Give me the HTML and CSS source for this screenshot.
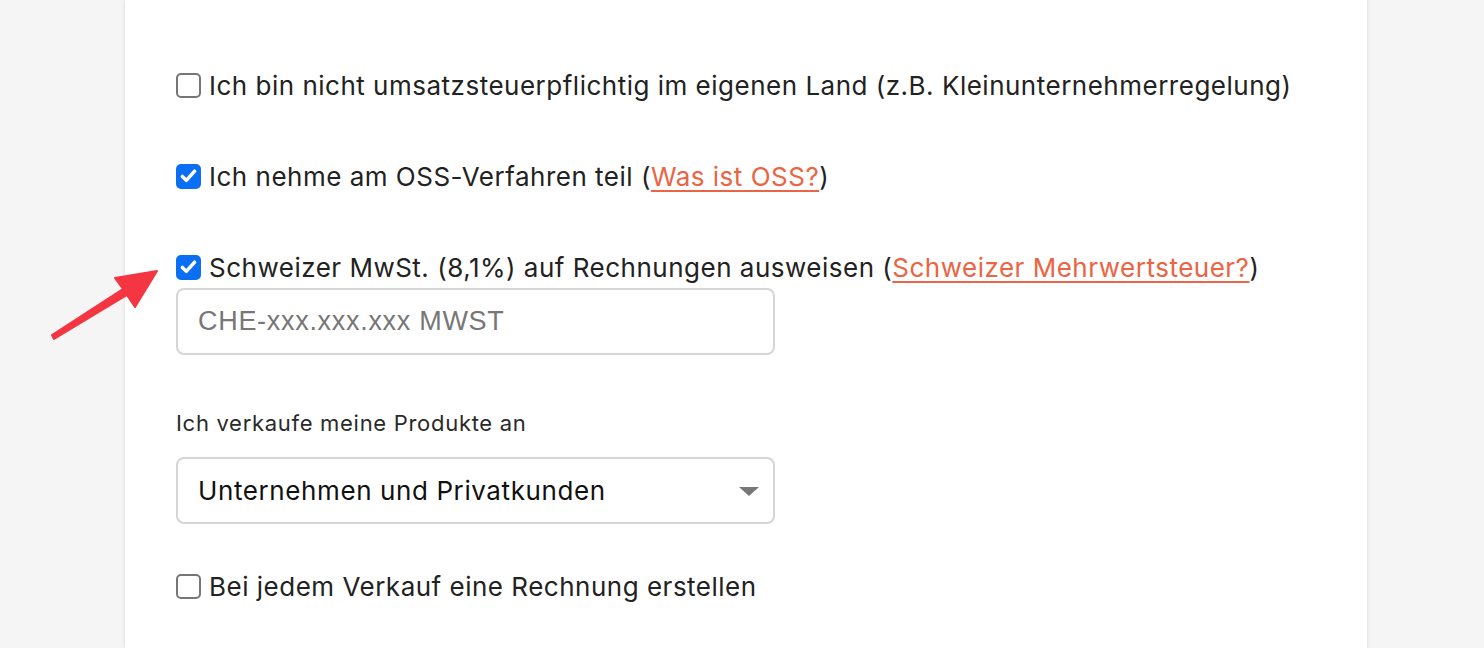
FILE: index.html
```html
<!DOCTYPE html>
<html lang="de">
<head>
<meta charset="UTF-8">
<meta name="viewport" content="width=device-width, initial-scale=1.0">
<title>Steuereinstellungen</title>
<link rel="stylesheet" href="styles.css">
</head>
<body>

<div class="page">
    <div class="panel">

        <label class="option first">
            <span class="check"></span>
            <span>Ich bin nicht umsatzsteuerpflichtig im eigenen Land (z.B. Kleinunternehmerregelung)</span>
        </label>

        <label class="option">
            <span class="check checked">
                <svg viewBox="0 0 24 24" width="22" height="22"><path d="M5 12.5l4.5 4.5L19 6.5" fill="none" stroke="#fff" stroke-width="4" stroke-linecap="round" stroke-linejoin="round"/></svg>
            </span>
            <span>Ich nehme am OSS-Verfahren teil (<a href="#" class="link">Was ist OSS?</a>)</span>
        </label>

        <label class="option">
            <span class="check checked">
                <svg viewBox="0 0 24 24" width="22" height="22"><path d="M5 12.5l4.5 4.5L19 6.5" fill="none" stroke="#fff" stroke-width="4" stroke-linecap="round" stroke-linejoin="round"/></svg>
            </span>
            <span>Schweizer MwSt. (8,1%) auf Rechnungen ausweisen (<a href="#" class="link">Schweizer Mehrwertsteuer?</a>)</span>
        </label>
        <input type="text" class="field" placeholder="CHE-xxx.xxx.xxx MWST">

        <div class="field-label">Ich verkaufe meine Produkte an</div>
        <div class="select-wrap">
            <select class="field select">
                <option>Unternehmen und Privatkunden</option>
            </select>
            <span class="caret"></span>
        </div>

        <label class="option last">
            <span class="check"></span>
            <span>Bei jedem Verkauf eine Rechnung erstellen</span>
        </label>

    </div>

    <!-- annotation arrow -->
    <svg class="arrow" width="180" height="360" viewBox="0 0 180 360">
        <polygon points="52,335 123,289 115,278 157,271 135,307 127,295 54,339" fill="#f43542" stroke="#f43542" stroke-width="2" stroke-linejoin="round"/>
    </svg>
</div>

</body>
</html>
```

FILE: styles.css
```css
body {
    margin: 0;
    background-color: #f5f5f5;
    font-family: Inter, "Noto Sans", sans-serif;
    color: #222222;
    overflow: hidden;
}
.page {
    position: relative;
    padding-left: 125px;
    height: 100vh;
}
.panel {
    background-color: #ffffff;
    width: 1242px;
    height: 100%;
    box-sizing: border-box;
    padding: 69px 0 0 51px;
    box-shadow: 0 0 4px rgba(0, 0, 0, 0.12);
}
.option {
    display: flex;
    align-items: center;
    gap: 8px;
    height: 32px;
    font-size: 26px;
    letter-spacing: 0.5px;
    margin-top: 59px;
    cursor: pointer;
}
.option.first {
    margin-top: 0;
}
.option.last {
    margin-top: 46px;
}
.check {
    flex: none;
    width: 25px;
    height: 25px;
    box-sizing: border-box;
    border: 2px solid #767676;
    border-radius: 5px;
    display: flex;
    align-items: center;
    justify-content: center;
    background-color: #ffffff;
}
.check.checked {
    background-color: #0b6ff5;
    border-color: #0b6ff5;
}
.link {
    color: #ec6443;
    text-decoration: underline;
    text-underline-offset: 4px;
    text-decoration-thickness: 2px;
}
.field {
    display: block;
    width: 599px;
    height: 67px;
    box-sizing: border-box;
    margin-top: 5px;
    border: 2px solid #d6d6d6;
    border-radius: 8px;
    padding: 0 20px;
    font-family: "Liberation Sans", Arial, sans-serif;
    font-size: 27px;
    letter-spacing: 0.7px;
    color: #111111;
    background-color: #ffffff;
    outline: none;
}
.field::placeholder {
    color: #777777;
}
.field-label {
    margin-top: 54px;
    font-size: 22px;
    letter-spacing: 0.7px;
    line-height: 28px;
    color: #2a2a2a;
}
.select-wrap {
    position: relative;
    width: 599px;
    margin-top: 20px;
}
.select {
    margin-top: 0;
    -webkit-appearance: none;
    appearance: none;
    font-family: Inter, "Noto Sans", sans-serif;
    font-size: 26px;
    letter-spacing: 0.6px;
    color: #111111;
}
.caret {
    position: absolute;
    right: 16px;
    top: 30px;
    width: 0;
    height: 0;
    border-left: 10px solid transparent;
    border-right: 10px solid transparent;
    border-top: 9px solid #777777;
}
.arrow {
    position: absolute;
    left: 0;
    top: 0;
}
```
